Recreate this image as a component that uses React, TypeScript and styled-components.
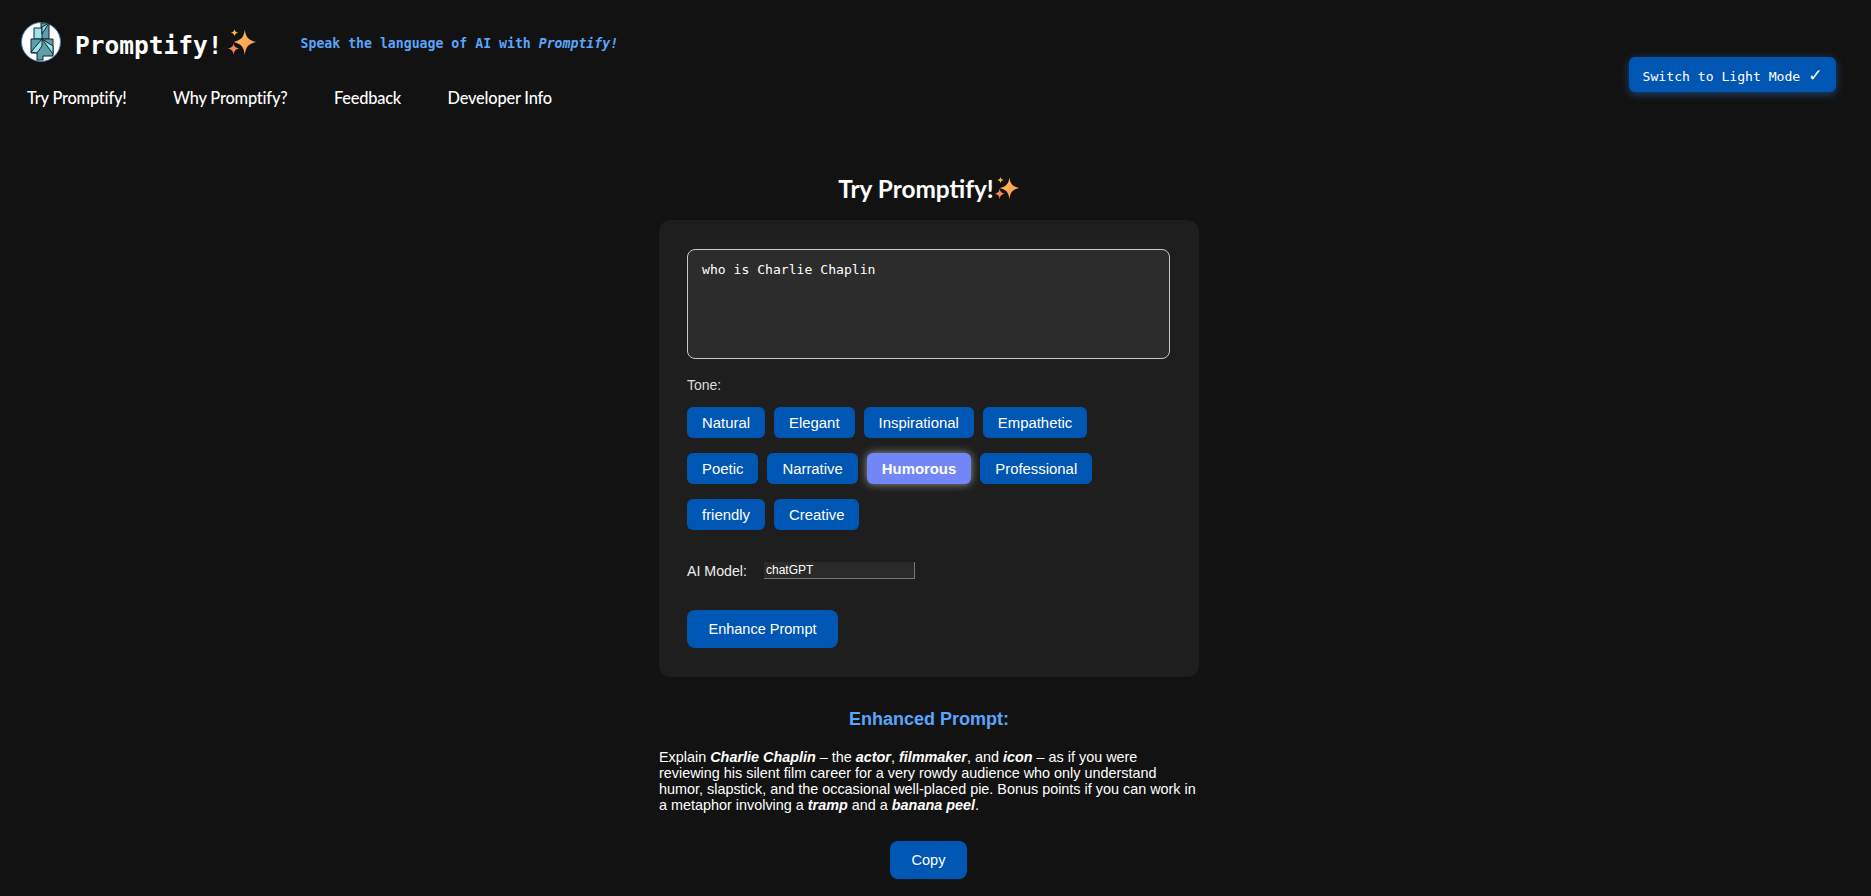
import styled, { createGlobalStyle } from 'styled-components';

const tones = [
  'Natural', 'Elegant', 'Inspirational', 'Empathetic',
  'Poetic', 'Narrative', 'Humorous', 'Professional',
  'friendly', 'Creative',
];

const navLinks = ['Try Promptify!', 'Why Promptify?', 'Feedback', 'Developer Info'];

function Sparkles({ size }: { size: number }) {
  return (
    <svg width={size} height={size} viewBox="0 0 32 32" style={{ flexShrink: 0 }}>
      <defs>
        <linearGradient id="spark" x1="0" y1="0" x2="1" y2="1">
          <stop offset="0" stopColor="#ffc35c" />
          <stop offset="1" stopColor="#fb8f4e" />
        </linearGradient>
      </defs>
      <path d="M19 3 C20 11 23 14 31 16 C23 18 20 21 19 30 C18 21 15 18 7 16 C15 14 18 11 19 3Z" fill="url(#spark)" />
      <path d="M7 17 C7.5 20.5 9 22 13 23 C9 24 7.5 25.5 7 30 C6.5 25.5 5 24 1 23 C5 22 6.5 20.5 7 17Z" fill="#f5845c" />
      <path d="M8 2 C8.4 4.5 9.2 5.4 12 6 C9.2 6.6 8.4 7.5 8 10 C7.6 7.5 6.8 6.6 4 6 C6.8 5.4 7.6 4.5 8 2Z" fill="#ffb64f" />
    </svg>
  );
}

function Logo() {
  return (
    <svg width="40" height="40" viewBox="0 0 40 40" style={{ flexShrink: 0 }}>
      <circle cx="20" cy="20" r="19.5" fill="#fff" stroke="#3f7fa8" strokeWidth="1" />
      <path d="M20 1 H28 V17 H20Z" fill="#5f9ea8" stroke="#10262b" strokeWidth="1" />
      <path d="M13 6 H21 V17 H13Z" fill="#9fe3ee" stroke="#10262b" strokeWidth="1" />
      <path d="M10 17 H32 V34 H22 V38 H16 V31 H10Z" fill="#5f9ea8" stroke="#10262b" strokeWidth="1" />
      <path d="M21 17 L10 30 L16 31 L21 24Z" fill="#9fe3ee" stroke="#10262b" strokeWidth="1" />
      <path d="M21 17 L32 32 V24Z" fill="#9fe3ee" stroke="#10262b" strokeWidth="1" />
      <path d="M21 5 L28 1 L21 12Z" fill="#9fe3ee" stroke="#10262b" strokeWidth="1" />
    </svg>
  );
}

export default function App() {
  return (
    <Page>
      <GlobalStyle />
      <Header>
        <HeaderLeft>
          <Brand>
            <Logo />
            <BrandName>Promptify!</BrandName>
            <Sparkles size={30} />
            <Tagline>Speak the language of AI with <em>Promptify!</em></Tagline>
          </Brand>
          <Nav>
            {navLinks.map((link) => (
              <NavLink key={link}>{link}</NavLink>
            ))}
          </Nav>
        </HeaderLeft>
        <ThemeBtn>Switch to Light Mode <Check>✓</Check></ThemeBtn>
      </Header>
      <Main>
        <Title>Try Promptify!<Sparkles size={26} /></Title>
        <Card>
          <PromptInput readOnly value="who is Charlie Chaplin" />
          <ToneLabel>Tone:</ToneLabel>
          <ToneList>
            {tones.map((tone) => (
              <ToneBtn key={tone} $active={tone === 'Humorous'}>{tone}</ToneBtn>
            ))}
          </ToneList>
          <ModelRow>
            <ModelLabel>AI Model:</ModelLabel>
            <ModelInput readOnly value="chatGPT" />
          </ModelRow>
          <EnhanceBtn>Enhance Prompt</EnhanceBtn>
        </Card>
        <ResultTitle>Enhanced Prompt:</ResultTitle>
        <ResultText>
          Explain <b><i>Charlie Chaplin</i></b> – the <b><i>actor</i></b>, <b><i>filmmaker</i></b>, and <b><i>icon</i></b> – as if you were<br />
          reviewing his silent film career for a very rowdy audience who only understand<br />
          humor, slapstick, and the occasional well-placed pie. Bonus points if you can work in<br />
          a metaphor involving a <b><i>tramp</i></b> and a <b><i>banana peel</i></b>.
        </ResultText>
        <CopyBtn>Copy</CopyBtn>
      </Main>
    </Page>
  );
}

const GlobalStyle = createGlobalStyle`
  html, body {
    margin: 0;
    background-color: #121212;
    color: #fff;
    font-family: "Liberation Sans", Arial, sans-serif;
  }
  html { overflow: hidden; height: 896px; }
`;

const Page = styled.div`
  padding-right: 13px;
`;

const Header = styled.header`
  display: flex;
  justify-content: space-between;
  padding: 22px 22px 0 21px;
`;

const HeaderLeft = styled.div`
  display: flex;
  flex-direction: column;
`;

const Brand = styled.div`
  display: flex;
  align-items: center;
  height: 40px;
`;

const BrandName = styled.span`
  font-family: "DejaVu Sans Mono", monospace;
  font-size: 24.5px;
  font-weight: 700;
  margin: 7px 4px 0 14px;
`;

const Tagline = styled.span`
  font-family: "DejaVu Sans Mono", monospace;
  font-size: 13.2px;
  font-weight: 700;
  color: #5aa5fb;
  margin-left: 44px;
  margin-bottom: -2px;
`;

const Nav = styled.nav`
  display: flex;
  gap: 46.5px;
  padding: 25px 0 0 6px;
`;

const NavLink = styled.a`
  font-family: Lato, sans-serif;
  font-size: 16.4px;
  font-weight: 500;
  line-height: 22px;
  letter-spacing: -0.2px;
  color: #fff;
`;

const ThemeBtn = styled.button`
  align-self: flex-start;
  margin-top: 35px;
  width: 207px;
  height: 35px;
  padding: 3px 0 0;
  border: none;
  border-radius: 6px;
  background-color: #0056b3;
  color: #fff;
  font-family: "DejaVu Sans Mono", monospace;
  font-size: 13.1px;
  box-shadow: 0 2px 8px rgba(40, 130, 240, 0.45);
`;

const Check = styled.span`
  font-family: "DejaVu Sans", sans-serif;
  font-size: 17px;
  line-height: 14px;
  font-weight: 700;
`;

const Main = styled.main`
  width: 540px;
  margin: 65px auto 0;
  display: flex;
  flex-direction: column;
  align-items: stretch;
`;

const Title = styled.h2`
  display: flex;
  justify-content: center;
  align-items: center;
  margin: 0 0 18px;
  height: 28px;
  font-family: Lato, sans-serif;
  font-size: 24.4px;
  font-weight: 700;
`;

const Card = styled.section`
  display: flex;
  flex-direction: column;
  align-items: flex-start;
  padding: 29px 28px;
  height: 457px;
  box-sizing: border-box;
  background-color: #1e1e1e;
  border-radius: 12px;
  & > * {
    flex-shrink: 0;
  }
`;

const PromptInput = styled.textarea`
  height: 96px;
  box-sizing: content-box;
  width: 455px;
  padding: 12px 12px 0 14px;
  border: 1px solid #c8c8c8;
  border-radius: 8px;
  background-color: #2c2c2c;
  color: #fff;
  font-family: "DejaVu Sans Mono", monospace;
  font-size: 13.1px;
  resize: none;
  outline: none;
`;

const ToneLabel = styled.label`
  margin-top: 18px;
  font-size: 14px;
  line-height: 17px;
  color: #ddd;
`;

const ToneList = styled.div`
  display: flex;
  flex-wrap: wrap;
  gap: 15px 9px;
  margin-top: 13px;
  width: 470px;
`;

const ToneBtn = styled.button<{ $active?: boolean }>`
  height: 31px;
  padding: 0 15px;
  border: none;
  border-radius: 6px;
  background-color: ${(p) => (p.$active ? '#7286f8' : '#0056b3')};
  color: #fff;
  font-family: "Liberation Sans", Arial, sans-serif;
  font-size: 14.9px;
  font-weight: ${(p) => (p.$active ? 700 : 400)};
  box-shadow: ${(p) => (p.$active ? '0 0 8px rgba(255, 255, 255, 0.55)' : 'none')};
`;

const ModelRow = styled.div`
  display: flex;
  align-items: center;
  margin-top: 32px;
`;

const ModelLabel = styled.label`
  font-size: 14.2px;
  color: #eee;
  width: 77px;
`;

const ModelInput = styled.input`
  width: 146px;
  height: 16px;
  padding: 0 2px;
  border-width: 0 1px 1px 0;
  border-style: solid;
  border-color: #777;
  background-color: #2a2a2a;
  color: #fff;
  font-family: "Liberation Sans", Arial, sans-serif;
  font-size: 12px;
  outline: none;
`;

const EnhanceBtn = styled.button`
  width: 151px;
  height: 38px;
  margin-top: 31px;
  padding: 0;
  border: none;
  border-radius: 8px;
  background-color: #0056b3;
  color: #fff;
  font-family: "Liberation Sans", Arial, sans-serif;
  font-size: 14.5px;
`;

const ResultTitle = styled.h3`
  margin: 31px 0 0;
  text-align: center;
  font-size: 18px;
  line-height: 22px;
  font-weight: 700;
  color: #5aa5fb;
`;

const ResultText = styled.p`
  margin: 19px 0 0;
  font-size: 14.4px;
  line-height: 16px;
  white-space: nowrap;
  color: #fff;
`;

const CopyBtn = styled.button`
  align-self: center;
  width: 77px;
  height: 38px;
  margin: 28px 0 0 -1px;
  padding: 0;
  border: none;
  border-radius: 8px;
  background-color: #0056b3;
  color: #fff;
  font-family: "Liberation Sans", Arial, sans-serif;
  font-size: 14.5px;
`;
